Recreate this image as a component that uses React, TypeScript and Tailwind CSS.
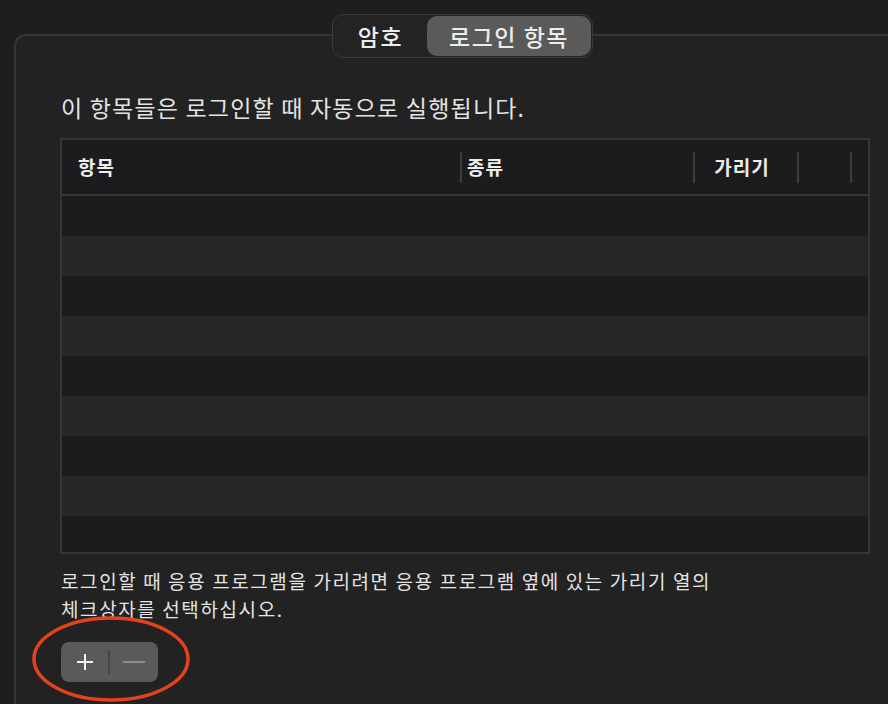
import React from "react";

const font = { fontFamily: '"Noto Sans CJK KR", "Noto Sans", sans-serif' };

function Sep() {
  return <div className="w-[2px] h-[31px] bg-[#3c3c3c] shrink-0" />;
}

export default function App() {
  const rows = [0, 1, 2, 3, 4, 5, 6, 7];
  return (
    <div
      className="w-[888px] h-[704px] bg-[#1e1e1e] overflow-hidden relative text-[#e6e6e6]"
      style={font}
    >
      <div className="ml-[14px] mt-[34px] w-[900px] h-[700px] border-2 border-[#363636] rounded-tl-[12px] bg-[#222222] flex flex-col">
        {/* segmented control */}
        <div className="ml-[316px] -mt-[22px] w-[261px] h-[44px] rounded-[11px] border border-[#3a3a3a] bg-[#232323] flex items-center p-[1px]">
          <div className="w-[93px] h-full flex items-center justify-center text-[23px] tracking-[1.5px] font-medium leading-none text-[#ececec]">
            암호
          </div>
          <div className="flex-1 h-full rounded-[10px] bg-[#5a5a5a] flex items-center justify-center text-[23px] tracking-[1.5px] font-medium leading-none text-[#ececec]">
            로그인 항목
          </div>
        </div>

        <div className="ml-[45px] mt-[34px] text-[23px] tracking-[1.2px] leading-[30px] text-[#e4e4e4]">
          이 항목들은 로그인할 때 자동으로 실행됩니다.
        </div>

        {/* table */}
        <div className="ml-[44px] mt-[16px] w-[810px] border-2 border-[#363636] flex flex-col">
          <div className="h-[54px] bg-[#1c1c1e] flex items-center text-[19px] tracking-[1px] font-bold text-[#ededed] border-b-2 border-[#363636] box-content">
            <div className="w-[398px] pl-[16px]">항목</div>
            <Sep />
            <div className="w-[231px] pl-[5px]">종류</div>
            <Sep />
            <div className="w-[102px] text-center pr-[8px]">가리기</div>
            <Sep />
            <div className="w-[51px]" />
            <Sep />
          </div>
          {rows.map((i) => (
            <div
              key={i}
              className={i % 2 === 0 ? "h-[40px] bg-[#1c1c1c]" : "h-[40px] bg-[#262626]"}
            />
          ))}
          <div className="h-[36px] bg-[#1c1c1c]" />
        </div>

        <div className="ml-[45px] mt-[13px] text-[19px] tracking-[1.6px] leading-[28px] text-[#e4e4e4]">
          로그인할 때 응용 프로그램을 가리려면 응용 프로그램 옆에 있는 가리기 열의
          <br />
          체크상자를 선택하십시오.
        </div>

        <div className="ml-[45px] mt-[19px] w-[97px] h-[40px] rounded-[8px] bg-[#5a5a5a] flex items-center">
          <div className="w-[47px] h-full flex items-center justify-center">
            <svg width="18" height="18" viewBox="0 0 18 18">
              <path d="M9 1v16M1 9h16" stroke="#f2f2f2" strokeWidth="2" />
            </svg>
          </div>
          <div className="w-[2px] h-[24px] bg-[#464646]" />
          <div className="flex-1 h-full flex items-center justify-center">
            <svg width="22" height="4" viewBox="0 0 22 4">
              <path d="M0 2h22" stroke="#8c8c8c" strokeWidth="2" />
            </svg>
          </div>
        </div>
      </div>

      <svg
        className="absolute left-[30px] top-[614px] pointer-events-none"
        width="164"
        height="92"
        viewBox="0 0 164 92"
      >
        <ellipse
          cx="81"
          cy="45"
          rx="77"
          ry="41"
          fill="none"
          stroke="#e4421f"
          strokeWidth="3.5"
        />
      </svg>
    </div>
  );
}
